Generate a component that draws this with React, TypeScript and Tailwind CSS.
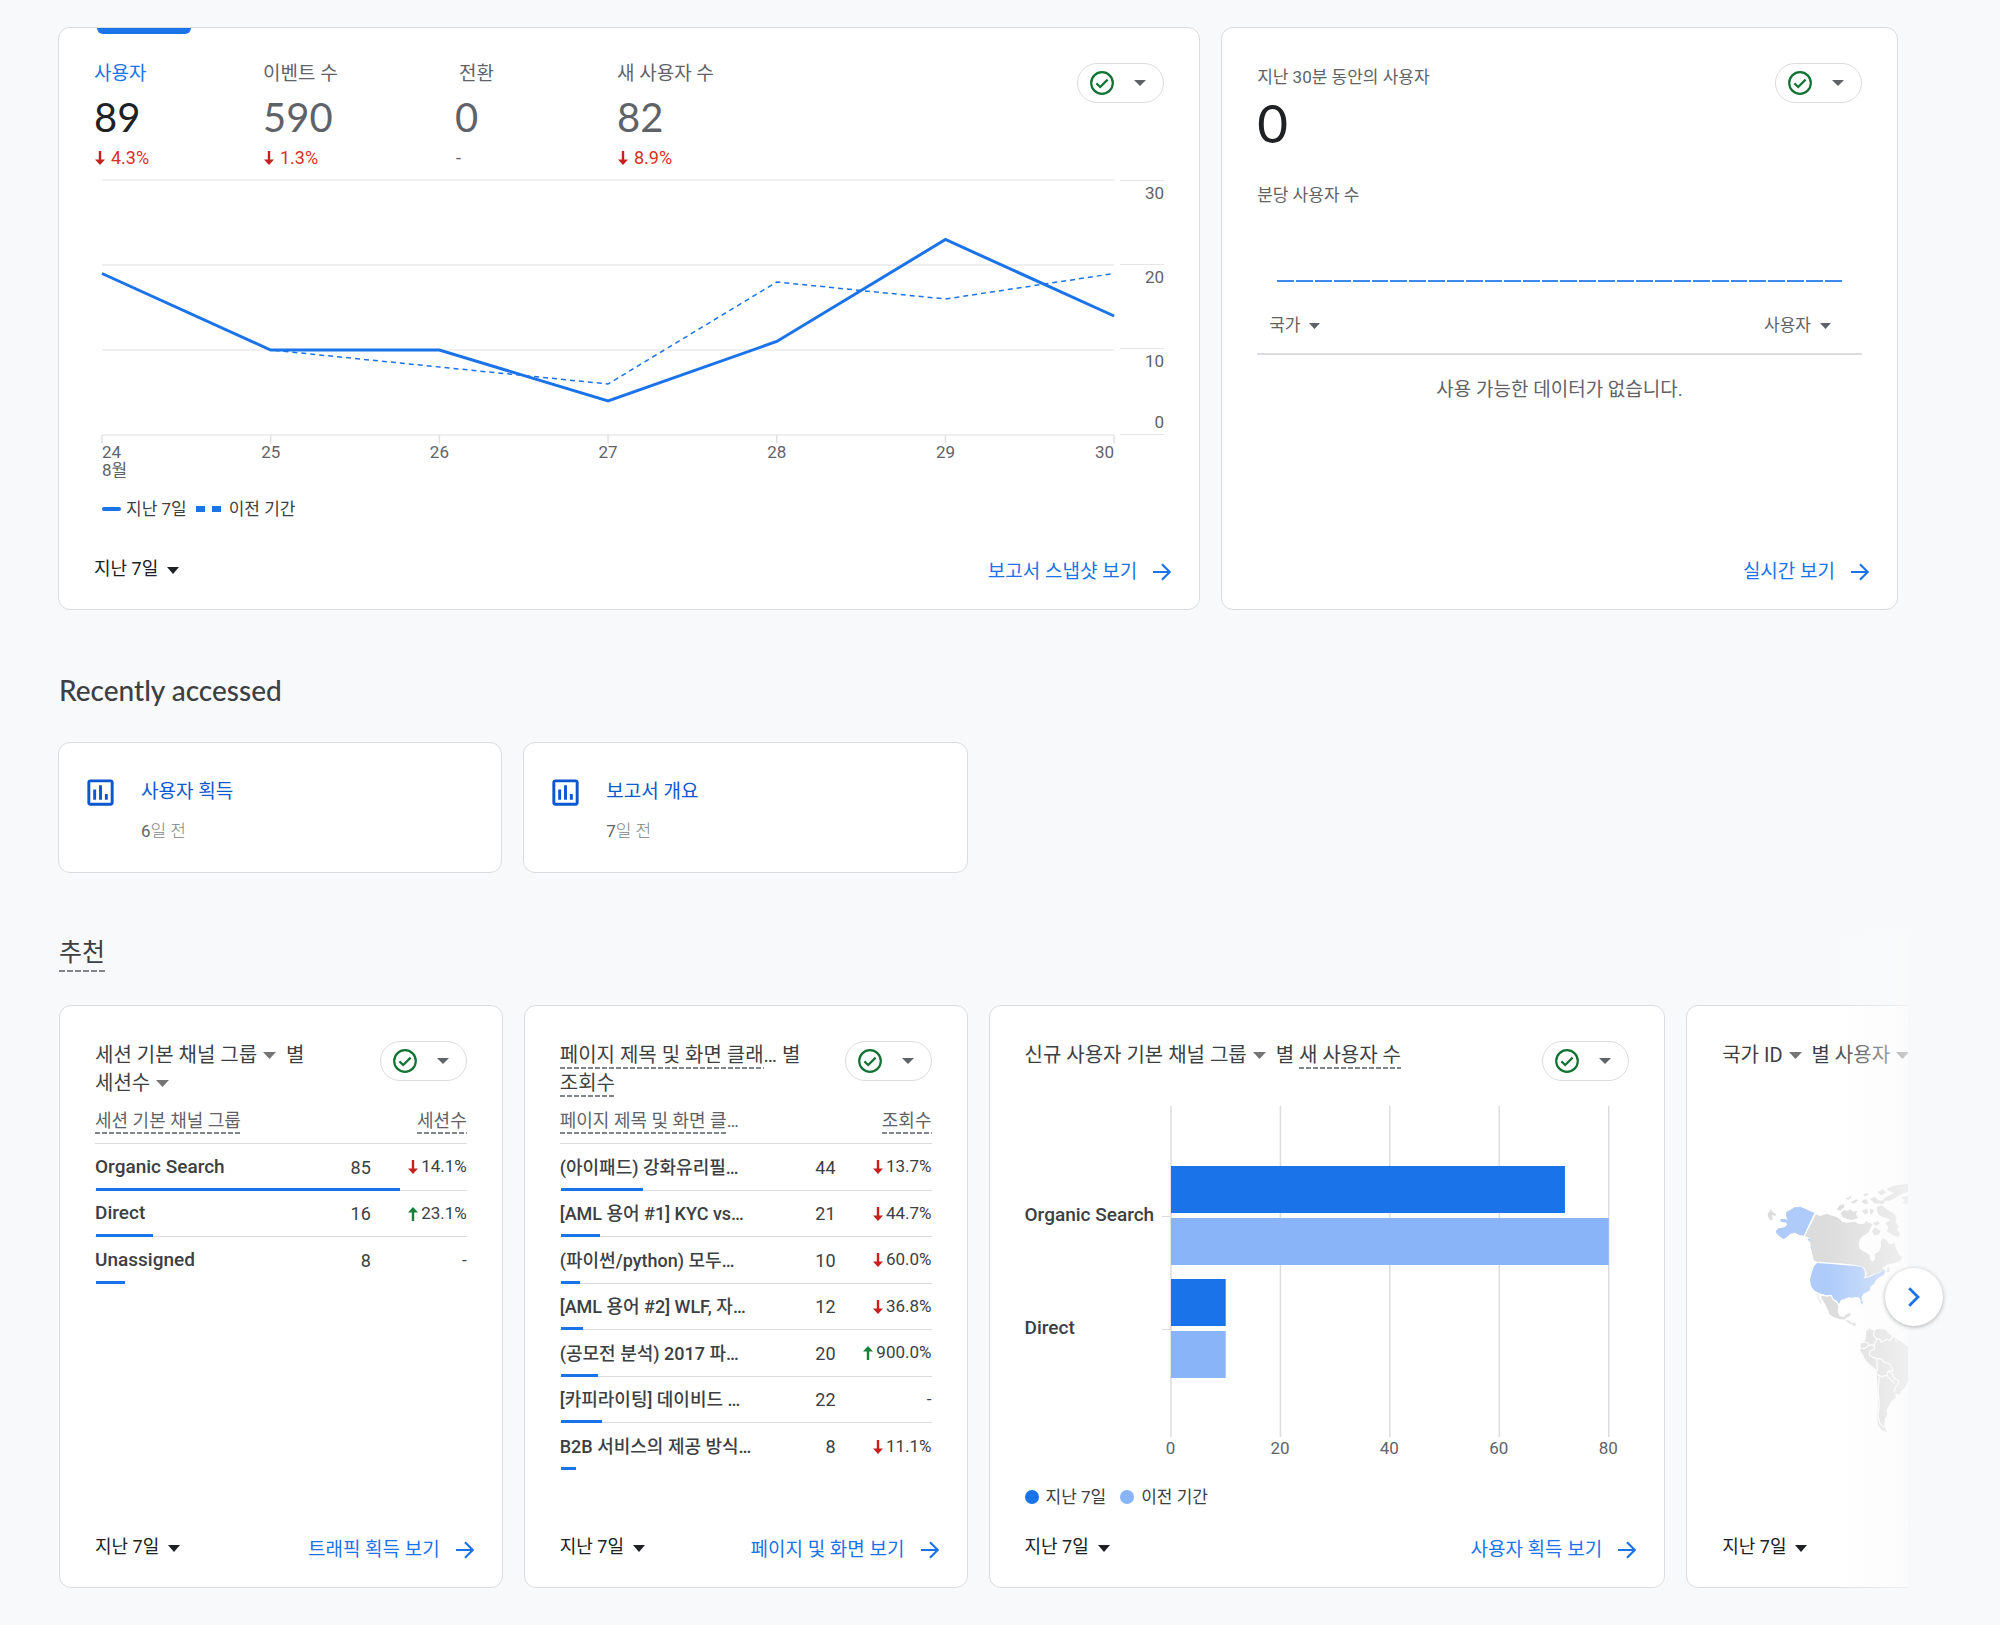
import type { ReactNode } from "react";

const dottedClass =
  "bg-[repeating-linear-gradient(90deg,#80868b_0_5px,transparent_5px_7px)] bg-[length:100%_2px] bg-bottom bg-no-repeat";

function Caret({ className }: { className: string }) {
  return (
    <svg viewBox="0 0 12 6" className={className} aria-hidden="true" preserveAspectRatio="none">
      <path d="M0 0H12L6 6Z" fill="currentColor" />
    </svg>
  );
}

function StatusPill() {
  return (
    <button
      type="button"
      aria-label="데이터 품질"
      className="flex h-10 w-[87px] shrink-0 items-center justify-between rounded-full border border-[#dadce0] bg-white pr-[17px] pl-3 text-[#5f6368]"
    >
      <svg viewBox="0 0 24 24" className="size-6" fill="none" stroke="#137333" strokeWidth="2.2" aria-hidden="true">
        <circle cx="12" cy="12" r="10.8" />
        <path d="M6.4 12.4L10.2 16L17.6 8.6" />
      </svg>
      <Caret className="h-[6px] w-3" />
    </button>
  );
}

function ChangeArrow({ up, className }: { up: boolean; className: string }) {
  return up ? (
    <svg viewBox="0 0 10 14" className={className} fill="#188038" aria-label="증가">
      <path d="M5 0L10 5.4H6.2V14H3.8V5.4H0Z" />
    </svg>
  ) : (
    <svg viewBox="0 0 10 14" className={className} fill="#c5221f" aria-label="감소">
      <path d="M5 14L10 8.6H6.2V0H3.8V8.6H0Z" />
    </svg>
  );
}

function Card({
  className,
  children,
  period = true,
  link,
}: {
  className: string;
  children: ReactNode;
  period?: boolean;
  link?: string;
}) {
  return (
    <article
      className={`flex min-h-[583px] flex-col rounded-xl border border-[#dadce0] bg-white pb-[25px] ${className}`}
    >
      <div className="px-[35px] pt-[35px]">{children}</div>
      <footer className="mt-auto flex items-end justify-between pr-7 pl-[35px]">
        {period ? (
          <button type="button" className="flex items-center gap-[9px] pb-[3px] text-[18px] leading-6 text-[#202124]">
            지난 7일
            <Caret className="mt-[3px] h-[7px] w-3" />
          </button>
        ) : (
          <span />
        )}
        {link && (
          <a href="#report" className="flex items-center gap-4 text-[19px] leading-6 text-[#1a73e8]">
            {link}
            <svg viewBox="0 0 18 18" className="size-[18px]" fill="none" stroke="currentColor" strokeWidth="2.2" aria-hidden="true">
              <path d="M0 9H16.5M9 1.2L16.8 9L9 16.8" />
            </svg>
          </a>
        )}
      </footer>
    </article>
  );
}

/* ---------- Overview ---------- */

const metrics = [
  { label: "사용자", value: "89", change: "4.3%", width: "w-[169px]", pad: "", active: true },
  { label: "이벤트 수", value: "590", change: "1.3%", width: "w-[192px]", pad: "", active: false },
  { label: "전환", value: "0", change: "", width: "w-[162px]", pad: "pl-1", active: false },
  { label: "새 사용자 수", value: "82", change: "8.9%", width: "w-[120px]", pad: "", active: false },
];

const current = [19, 10, 10, 4, 11, 23, 14];
const previous = [19, 10, 8, 6, 18, 16, 19];
const days = ["24", "25", "26", "27", "28", "29", "30"];

const points = (values: number[]) => values.map((v, i) => `${i * 100},${300 - v * 10}`).join(" ");

function LineChart() {
  return (
    <div className="mt-3 ml-2 text-[17px] text-[#5f6368]">
      <div className="flex h-[255px] gap-[6px]">
        <svg viewBox="0 0 600 300" preserveAspectRatio="none" className="h-full min-w-0 flex-1 overflow-visible" fill="none">
          {[0, 100, 200, 300].map((y) => (
            <path key={y} d={`M0 ${y}H600`} stroke="#ebebeb" strokeWidth="1.5" vectorEffect="non-scaling-stroke" />
          ))}
          {days.map((d, i) => (
            <path key={d} d={`M${i * 100} 300V310`} stroke="#e0e0e0" strokeWidth="1.5" vectorEffect="non-scaling-stroke" />
          ))}
          <polyline points={points(previous)} stroke="#1a73e8" strokeWidth="1.5" strokeDasharray="5 4" vectorEffect="non-scaling-stroke" />
          <polyline points={points(current)} stroke="#1a73e8" strokeWidth="3" vectorEffect="non-scaling-stroke" />
        </svg>
        <div className="flex w-11 flex-col text-right leading-5">
          <div className="flex-1 border-t border-[#e6e6e6] pt-[2px]">30</div>
          <div className="flex-1 border-t border-[#e6e6e6] pt-[2px]">20</div>
          <div className="flex flex-1 flex-col justify-between border-y border-[#e6e6e6] pt-[2px] pb-[2px]">
            <span>10</span>
            <span>0</span>
          </div>
        </div>
      </div>
      <div className="mt-2 mr-[50px] flex justify-between leading-[18px]">
        {days.map((d, i) => (
          <div
            key={d}
            className={`flex w-0 whitespace-nowrap ${i === 0 ? "justify-start" : i === 6 ? "justify-end" : "justify-center"}`}
          >
            <span>
              {d}
              {i === 0 && <span className="block">8월</span>}
            </span>
          </div>
        ))}
      </div>
      <div className="mt-5 flex items-center leading-5 text-[#3c4043]">
        <span className="h-1 w-[19px] rounded-full bg-[#1a73e8]" />
        <span className="ml-[5px]">지난 7일</span>
        <span className="ml-[9px] h-[6px] w-[9px] bg-[#1a73e8]" />
        <span className="ml-[7px] h-[6px] w-[9px] bg-[#1a73e8]" />
        <span className="ml-2">이전 기간</span>
      </div>
    </div>
  );
}

function OverviewCard() {
  return (
    <Card className="relative col-span-5" link="보고서 스냅샷 보기">
      <div className="absolute top-0 left-[38px] h-[6px] w-[94px] rounded-b-md bg-[#1a73e8]" />
      <div className="flex items-start justify-between">
        <div className="flex">
          {metrics.map((m) => (
            <button key={m.label} type="button" className={`text-left ${m.width}`}>
              <span className={`block text-[19px] leading-[22px] ${m.pad} ${m.active ? "text-[#1a73e8]" : "text-[#5f6368]"}`}>
                {m.label}
              </span>
              <span
                className={`mt-2 block font-['Lato'] text-[40px] leading-[48px] ${m.active ? "text-[#202124]" : "text-[#5f6368]"}`}
              >
                {m.value}
              </span>
              <span className="mt-[7px] flex items-center gap-[6px] pl-px text-[18px] leading-5 text-[#d93025]">
                {m.change ? (
                  <>
                    <ChangeArrow up={false} className="h-[14px] w-[10px]" />
                    {m.change}
                  </>
                ) : (
                  <span className="text-[#5f6368]">-</span>
                )}
              </span>
            </button>
          ))}
        </div>
        <StatusPill />
      </div>
      <LineChart />
    </Card>
  );
}

function RealtimeCard() {
  return (
    <Card className="col-span-3" period={false} link="실시간 보기">
      <div className="text-[17px] leading-5 text-[#5f6368]">
        <div className="flex h-[92px] items-start justify-between">
          <div className="pt-1">
            <div>지난 30분 동안의 사용자</div>
            <div className="mt-[6px] font-['Lato'] text-[53px] leading-[60px] text-[#202124]">0</div>
          </div>
          <StatusPill />
        </div>
        <div className="mt-[30px]">분당 사용자 수</div>
        <div className="mt-[75px] flex gap-[2px] px-5">
          {Array.from({ length: 30 }, (_, i) => (
            <span key={i} className="h-[2px] flex-1 bg-[#3d88eb]" />
          ))}
        </div>
        <div className="mt-[33px] flex justify-between border-b-2 border-[#dadce0] pr-[31px] pb-[18px] pl-3">
          <button type="button" className="flex items-center gap-[9px]">
            국가 <Caret className="mt-px h-[6px] w-[11px]" />
          </button>
          <button type="button" className="flex items-center gap-[9px]">
            사용자 <Caret className="mt-px h-[6px] w-[11px]" />
          </button>
        </div>
        <p className="mt-[25px] text-center text-[19px]">사용 가능한 데이터가 없습니다.</p>
      </div>
    </Card>
  );
}

/* ---------- Recently accessed ---------- */

function RecentCard({ title, count }: { title: string; count: string }) {
  return (
    <article className="col-span-2 flex h-[131px] rounded-xl border border-[#dadce0] bg-white pt-8 pl-6">
      <svg viewBox="0 0 24 24" className="size-[35px] text-[#0b57d0]" fill="currentColor" aria-hidden="true">
        <path d="M9 17H7v-7h2zm4 0h-2V7h2zm4 0h-2v-4h2z" />
        <path d="M19 3H5c-1.100 0-2 .900-2 2v14c0 1.100.900 2 2 2h14c1.100 0 2-.900 2-2V5c0-1.100-.900-2-2-2zm0 16H5V5h14z" />
      </svg>
      <div className="pt-[5px] pl-[23px]">
        <a href="#recent" className="block text-[19px] leading-6 text-[#0b57d0]">
          {title}
        </a>
        <div className="mt-[15px] text-[17px] leading-6 font-light text-[#80868b]">
          <span className="font-normal text-[#5f6368]">{count}</span>일 전
        </div>
      </div>
    </article>
  );
}

/* ---------- Recommended ---------- */

function TitleMenu({ children }: { children: ReactNode }) {
  return (
    <button type="button" className="inline-flex items-center gap-[6px] whitespace-nowrap">
      {children}
      <Caret className="h-[7px] w-[13px] text-[#757575]" />
    </button>
  );
}

function TitleTerm({ children }: { children: ReactNode }) {
  return <span className={`inline-block whitespace-nowrap ${dottedClass}`}>{children}</span>;
}

function CardTitle({ children, pill = true }: { children: ReactNode; pill?: boolean }) {
  return (
    <div className="flex items-start justify-between">
      <h3 className="min-w-0 flex-1 pr-3 text-[20px] leading-7 text-[#3c4043]">{children}</h3>
      {pill && <StatusPill />}
    </div>
  );
}

type Row = { name: string; value: number; change: string; up?: boolean };

const channelRows: Row[] = [
  { name: "Organic Search", value: 85, change: "14.1%" },
  { name: "Direct", value: 16, change: "23.1%", up: true },
  { name: "Unassigned", value: 8, change: "-" },
];

const pageRows: Row[] = [
  { name: "(아이패드) 강화유리필…", value: 44, change: "13.7%" },
  { name: "[AML 용어 #1] KYC vs…", value: 21, change: "44.7%" },
  { name: "(파이썬/python) 모두…", value: 10, change: "60.0%" },
  { name: "[AML 용어 #2] WLF, 자…", value: 12, change: "36.8%" },
  { name: "(공모전 분석) 2017 파…", value: 20, change: "900.0%", up: true },
  { name: "[카피라이팅] 데이비드 …", value: 22, change: "-" },
  { name: "B2B 서비스의 제공 방식…", value: 8, change: "11.1%" },
];

function MetricTable({
  head,
  ellipsis,
  metric,
  rows,
  total,
  nameClass,
}: {
  head: string;
  ellipsis?: string;
  metric: string;
  rows: Row[];
  total: number;
  nameClass: string;
}) {
  return (
    <table className="w-full table-fixed border-separate border-spacing-0 text-[#3c4043]">
      <colgroup>
        <col />
        <col className="w-[60px]" />
        <col className="w-24" />
      </colgroup>
      <thead className="text-[18px] text-[#5f6368]">
        <tr className="h-[47px]">
          <th scope="col" className="border-b border-[#dadce0] text-left font-normal whitespace-nowrap">
            <span className={`inline-block leading-[26px] ${dottedClass}`}>{head}</span>
            {ellipsis}
          </th>
          <th scope="col" colSpan={2} className="border-b border-[#dadce0] text-right font-normal">
            <span className={`inline-block leading-[26px] ${dottedClass}`}>{metric}</span>
          </th>
        </tr>
      </thead>
      <tbody>
        {rows.map((r, i) => {
          const line = i < rows.length - 1 ? "border-b border-[#dadce0]" : "";
          return (
            <tr key={r.name} className="relative odd:h-[47px] even:h-[46px]">
              <td className={`font-medium whitespace-nowrap ${nameClass} ${line}`}>
                {r.name}
                <div className="absolute bottom-0 left-px h-[3px] bg-[#1a73e8]" style={{ width: `${(r.value / total) * 100}%` }} />
              </td>
              <td className={`text-right text-[18px] ${line}`}>{r.value}</td>
              <td className={`text-[17px] ${line}`}>
                <div className="flex items-center justify-end gap-[3px]">
                  {r.change !== "-" && <ChangeArrow up={!!r.up} className="h-[14px] w-[10px]" />}
                  {r.change}
                </div>
              </td>
            </tr>
          );
        })}
      </tbody>
    </table>
  );
}

const bars = [
  { y: 60, width: 72, fill: "#1a73e8" },
  { y: 112, width: 80, fill: "#8ab4f8" },
  { y: 173, width: 10, fill: "#1a73e8" },
  { y: 225, width: 10, fill: "#8ab4f8" },
];

function BarChart() {
  return (
    <div className="mt-[25px]">
      <div className="flex">
        <div className="w-[137px] pt-[53px] text-[19px] font-medium text-[#3c4043]">
          <div className="flex h-[113px] items-center">Organic Search</div>
          <div className="flex h-[113px] items-center">Direct</div>
        </div>
        <div className="w-[9px] pt-[110px]">
          <div className="h-px bg-[#dadce0]" />
          <div className="mt-28 h-px bg-[#dadce0]" />
        </div>
        <svg viewBox="0 0 80 331" preserveAspectRatio="none" className="mr-[21px] h-[331px] min-w-0 flex-1 overflow-visible">
          {[0, 20, 40, 60, 80].map((x) => (
            <path key={x} d={`M${x} 0V331`} stroke="#dadce0" strokeWidth="1.5" vectorEffect="non-scaling-stroke" />
          ))}
          {bars.map((b) => (
            <rect key={b.y} x="0" y={b.y} width={b.width} height="47" fill={b.fill} />
          ))}
        </svg>
      </div>
      <div className="mt-px mr-[21px] ml-[146px] flex justify-between text-[17px] leading-5 text-[#5f6368]">
        {["0", "20", "40", "60", "80"].map((t) => (
          <span key={t} className="flex w-0 justify-center">
            {t}
          </span>
        ))}
      </div>
      <div className="mt-[29px] flex items-center text-[17px] leading-5 text-[#3c4043]">
        <span className="size-[14px] rounded-full bg-[#1a73e8]" />
        <span className="ml-[7px]">지난 7일</span>
        <span className="ml-[14px] size-[14px] rounded-full bg-[#8ab4f8]" />
        <span className="ml-[7px]">이전 기간</span>
      </div>
    </div>
  );
}

function WorldMap() {
  return (
    <svg viewBox="0 0 510 840" className="mt-[101px] ml-[18px] h-[280px] w-[170px]" aria-label="국가별 사용자 지도">
      <g fill="#dcdcdc">
        <path d="M83 132L92 118L98 126L110 134L104 138L96 134L98 148L92 152L84 140Z" />
        <path d="M228 133L240 138L262 131L270 136L290 141L300 148L306 155L320 158L345 155L357 163L372 161L380 153L385 158L398 162L393 172L385 188L372 196L360 206L356 225L360 238L375 246L388 254L392 270L398 275L405 268L404 252L416 245L424 230L422 212L430 205L440 211L448 223L457 222L462 216L468 235L475 250L487 265L482 272L462 280L440 284L425 296L436 298L420 308L400 312L385 320L378 320L380 308L374 296L366 290L340 284L300 280L233 275L222 272L216 250L212 225L208 205L195 197Z" />
        <path d="M290 118L300 105L314 103L312 113L300 122Z" />
        <path d="M302 130L313 120L322 124L330 118L340 125L352 122L348 132L354 145L335 150L320 146L308 142Z" />
        <path d="M316 86l16-7 4 3-12 7zM332 97l16-9 8 3-14 10zM364 94l14-8 8 14-12 3zM370 74l12-6 3 6-10 5zM366 122l14-6 6 10-10 8zM390 116l12 4-6 14-6-4zM390 86l15-6 8 10 22 4-6 8-26-2zM398 160l14-6 8 6-12 8zM396 182l10-10 16 10-6 12-14 2z" />
        <path d="M410 110L425 106L440 118L460 130L470 142L466 155L478 172L470 176L480 192L474 202L460 196L440 184L446 172L436 160L450 150L438 143L420 138L412 125Z" />
        <path d="M413 66L430 58L438 68L422 76Z" />
        <path d="M438 58L460 47L505 41V64L482 74L466 84L448 92L425 93L440 80L462 70Z" />
        <path d="M482 82L505 78V102L486 99L494 92Z" />
        <path d="M440 296l7-6 2 15-8 2z" />
        <path d="M243 377L262 380L272 377L279 390L290 398L295 408L293 425L299 438L312 441L318 433L333 428L330 438L320 443L312 449L298 447L282 442L268 432L264 420L255 402L247 390Z" />
        <path d="M228 368l5 3 6 16 9 18-8-7-7-14z" opacity=".6" />
        <path d="M316 450l12 2 8 8 10-3 1 12-10-5-12-6z" />
        <path d="M388 474L394 480L404 482L412 476L438 480L445 490L455 496L456 506L464 500L474 510L485 515L497 526L505 528V632L494 655L484 664L480 674L465 670L468 684L455 692L448 705L440 720L442 735L436 745L432 765L436 776L440 786L425 780L414 765L412 740L414 700L412 650L410 600L395 588L378 572L368 552L361 543L363 518L375 512L378 500L378 485Z" />
      </g>
      <g fill="none" stroke="#fff" strokeWidth="3.5" strokeLinejoin="round">
        <path d="M404 482L400 494L408 506L420 508L424 517L440 508L450 512L456 502M468 502V516M412 506L402 524L388 526L380 516L364 518M362 534L372 536L388 526M402 524L404 536L390 544L388 554L398 562L410 566L412 600L408 604" />
        <path d="M412 566L424 566L432 576L448 582L454 590L460 602L444 604L440 616L424 620L412 612M444 604L456 610L462 624L476 632L474 644L466 652L462 668M440 616L458 634L464 640M418 620L414 660L418 700L414 740L420 760L432 772" />
      </g>
      <g fill="#aecbfa">
        <path d="M223 129L191 197L176 194L164 188L150 192L142 200L131 208L120 200L109 190L108 182L116 175L134 172L141 165L140 158L122 155L120 148L133 146L143 150L138 137L139 126L155 118L163 112L181 110L192 115L205 121Z" />
        <path d="M202 206l8 1-1 8zM212 230l5 4-3 4z" />
        <path d="M232 279L300 284L345 288L366 292L374 302L375 316L372 325L388 322L400 315L418 309L433 300L437 303L431 315L417 322L407 332L402 342L390 350L391 361L370 372L364 382L369 400L365 404L360 385L350 381L335 383L325 382L312 388L303 390L297 402L290 392L280 386L275 374L262 376L238 370L222 361L213 348L210 330L215 308L222 288Z" />
      </g>
    </svg>
  );
}

function Recommended() {
  return (
    <section className="relative mt-[61px]">
      <div className="mr-[92px] ml-[59px] flex flex-col items-start overflow-hidden">
        <h2 className="bg-[repeating-linear-gradient(90deg,#80868b_0_6px,transparent_6px_8px)] bg-[length:100%_2px] bg-bottom bg-no-repeat text-[25px] leading-[38px] text-[#3c4043]">
          추천
        </h2>
        <div className="mt-[33px] flex w-full gap-[21px]">
          <Card className="shrink-0 basis-[24%]" link="트래픽 획득 보기">
            <CardTitle>
              <TitleMenu>세션 기본 채널 그룹</TitleMenu> &nbsp;별 <TitleMenu>세션수</TitleMenu>
            </CardTitle>
            <MetricTable head="세션 기본 채널 그룹" metric="세션수" rows={channelRows} total={104} nameClass="text-[19px]" />
          </Card>
          <Card className="shrink-0 basis-[24%]" link="페이지 및 화면 보기">
            <CardTitle>
              <TitleTerm>페이지 제목 및 화면 클래</TitleTerm>… 별 <TitleTerm>조회수</TitleTerm>
            </CardTitle>
            <MetricTable head="페이지 제목 및 화면 클" ellipsis="…" metric="조회수" rows={pageRows} total={198} nameClass="text-[18px]" />
          </Card>
          <Card className="shrink-0 basis-[36.6%]" link="사용자 획득 보기">
            <CardTitle>
              <TitleMenu>신규 사용자 기본 채널 그룹</TitleMenu> &nbsp;별 <TitleTerm>새 사용자 수</TitleTerm>
            </CardTitle>
            <BarChart />
          </Card>
          <Card className="shrink-0 basis-[36.6%]">
            <CardTitle pill={false}>
              <TitleMenu>국가 ID</TitleMenu> &nbsp;별 <TitleMenu>사용자</TitleMenu>
            </CardTitle>
            <WorldMap />
          </Card>
        </div>
      </div>
      <div className="pointer-events-none absolute inset-y-0 right-[92px] w-20 bg-gradient-to-r from-[#fafafa]/0 to-[#fafafa]/65" />
      <button
        type="button"
        aria-label="다음"
        className="absolute top-[334px] right-[57px] flex size-[58px] items-center justify-center rounded-full bg-white shadow-[0_1px_4px_rgba(60,64,67,0.4)]"
      >
        <svg viewBox="0 0 12 20" className="h-5 w-3" fill="none" stroke="#1a73e8" strokeWidth="2.8" aria-hidden="true">
          <path d="M1.200 1.200L10 10L1.200 18.800" />
        </svg>
      </button>
    </section>
  );
}

export default function App() {
  return (
    <main className="min-h-screen bg-[#f8f9fb] pt-[27px] pb-[37px] font-['Roboto','Noto_Sans_CJK_KR',sans-serif]" lang="ko">
      <div className="mr-[102px] ml-[58px] grid grid-cols-8 gap-x-[21px]">
        <OverviewCard />
        <RealtimeCard />
      </div>
      <section className="mt-[62px] mr-[102px] ml-[58px]">
        <h2 className="ml-px font-['Lato'] text-[28px] leading-9 font-medium text-[#3c4043]">Recently accessed</h2>
        <div className="mt-[34px] grid grid-cols-8 gap-x-[21px]">
          <RecentCard title="사용자 획득" count="6" />
          <RecentCard title="보고서 개요" count="7" />
        </div>
      </section>
      <Recommended />
    </main>
  );
}
